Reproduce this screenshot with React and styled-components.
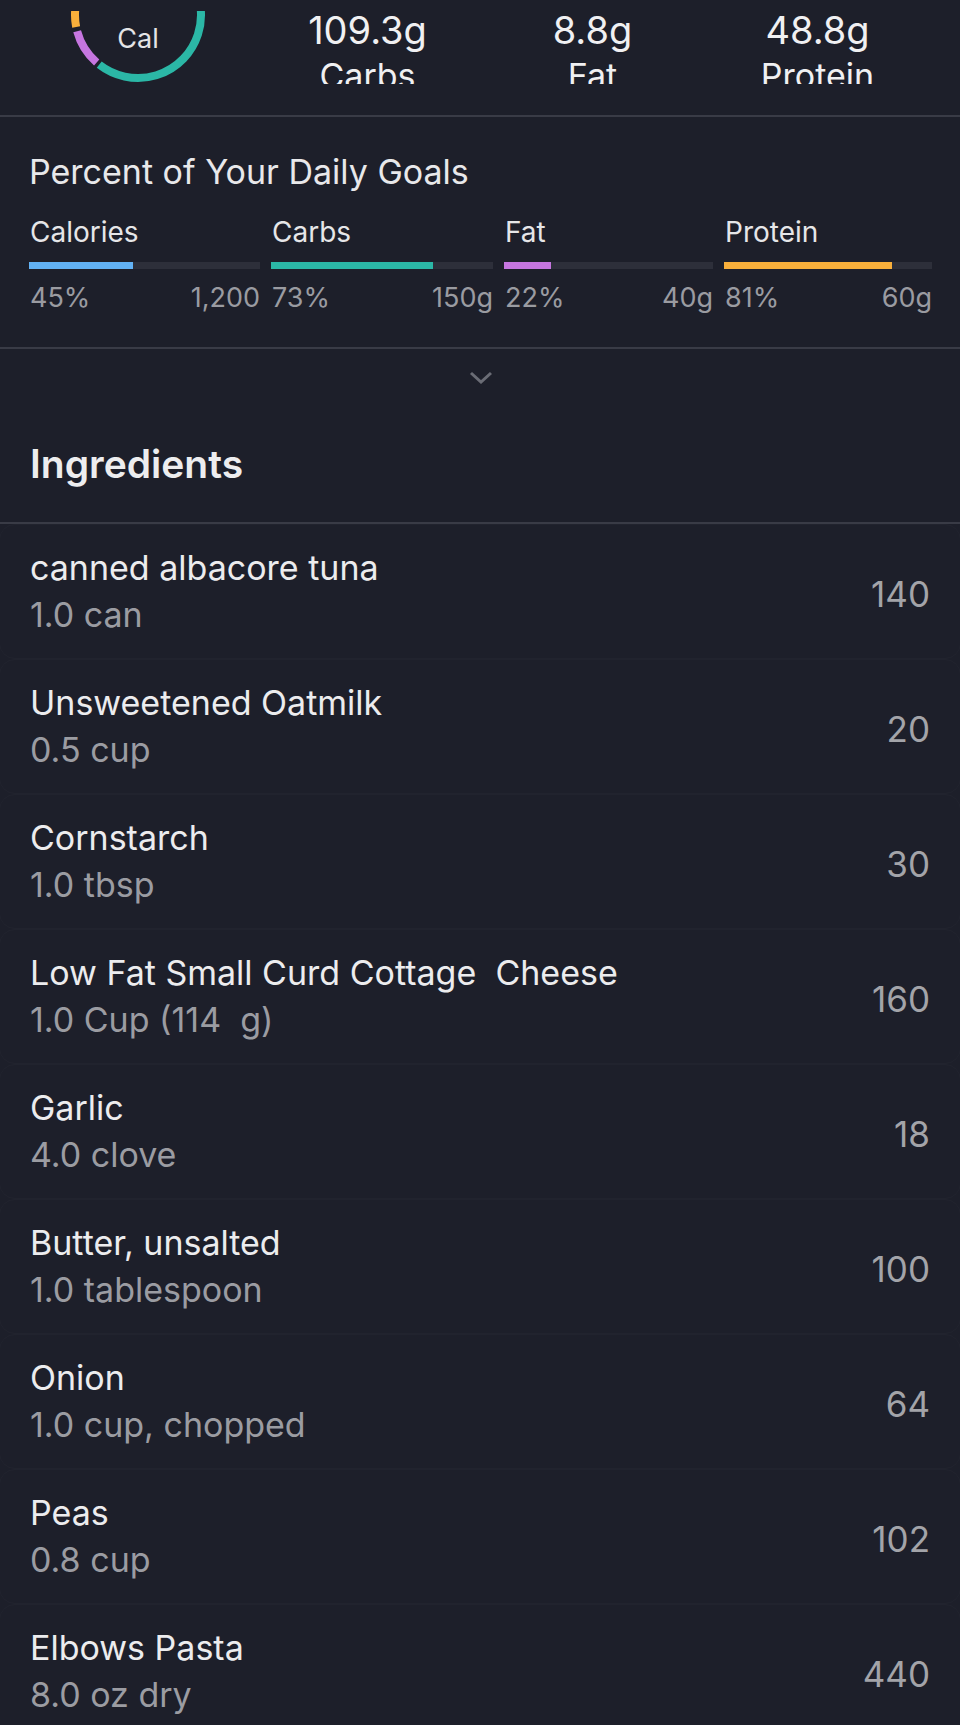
import React from "react";
import styled, { createGlobalStyle } from "styled-components";

const GlobalStyle = createGlobalStyle`
  html, body {
    margin: 0;
    padding: 0;
    background: #1d1f2a;
  }
  body {
    font-family: Inter, "Noto Sans", "Liberation Sans", sans-serif;
    color: #e8e8ea;
  }
`;

const Page = styled.main`
  width: 960px;
  height: 1725px;
  overflow: hidden;
  background: #1d1f2a;
`;

const Summary = styled.section`
  padding: 11px 30px 31px;
  border-bottom: 2px solid #393b46;
`;

const SummaryWindow = styled.div`
  height: 73px;
  overflow: hidden;
`;

const SummaryGrid = styled.div`
  display: grid;
  grid-template-columns: repeat(4, 1fr);
  margin-top: -66px;
`;

const RingWrap = styled.div`
  position: relative;
  width: 140px;
  height: 140px;
  margin-left: 38px;
`;

const RingLabel = styled.span`
  position: absolute;
  top: 80px;
  left: 0;
  right: 0;
  text-align: center;
  font-size: 27px;
  line-height: 27px;
  color: #e4e4e6;
`;

const Macro = styled.div`
  display: flex;
  flex-direction: column;
  align-items: center;
  padding-top: 62px;
`;

const MacroValue = styled.span`
  font-size: 38px;
  line-height: 46px;
  color: #f0f0f2;
`;

const MacroName = styled.span`
  font-size: 34px;
  line-height: 45px;
  color: #f0f0f2;
`;

const Goals = styled.section`
  padding: 35px 28px 31px 29px;
  border-bottom: 2px solid #393b46;
`;

const GoalsTitle = styled.h2`
  margin: 0 0 22px;
  font-size: 34px;
  line-height: 40px;
  font-weight: 400;
  color: #e8e8ea;
`;

const GoalsGrid = styled.div`
  display: grid;
  grid-template-columns: 231px 222px 209px 208px;
  column-gap: 11px;
`;

const Goal = styled.div`
  display: flex;
  flex-direction: column;
`;

const GoalLabel = styled.span`
  font-size: 28px;
  line-height: 36px;
  color: #e6e6e8;
  padding-left: 1px;
`;

const Track = styled.div`
  height: 7px;
  margin: 12px 0 11px;
  background: #2d2f3a;
`;

const Fill = styled.div`
  height: 100%;
  background: ${(p) => p.$color};
`;

const GoalNumbers = styled.div`
  display: flex;
  justify-content: space-between;
  font-size: 27px;
  line-height: 36px;
  color: #9a9ba1;
  padding-left: 1px;
`;

const Toggle = styled.div`
  display: flex;
  justify-content: center;
  padding-top: 22px;
`;

const Chevron = styled.svg`
  width: 24px;
  height: 14px;
  margin-left: 2px;
`;

const SectionHeader = styled.h2`
  margin: 0;
  padding: 55px 30px 34px;
  font-size: 39px;
  line-height: 48px;
  font-weight: 600;
  color: #ededef;
  border-bottom: 2px solid #393b46;
`;

const List = styled.ul`
  margin: 0;
  padding: 0;
  list-style: none;
`;

const Row = styled.li`
  display: flex;
  align-items: center;
  justify-content: space-between;
  padding: 20px 30px 21px 30px;
  border: 1px solid rgba(255, 255, 255, 0.02);
  border-radius: 16px;
  margin: 0 -1px;
  height: 135px;
  box-sizing: border-box;
`;

const RowText = styled.div`
  display: flex;
  flex-direction: column;
`;

const RowName = styled.span`
  font-size: 34px;
  line-height: 47px;
  color: #ececee;
  white-space: pre;
`;

const RowAmount = styled.span`
  font-size: 34px;
  line-height: 47px;
  color: #9b9ca2;
  white-space: pre;
`;

const RowCalories = styled.span`
  font-size: 35px;
  line-height: 40px;
  color: #a3a4a9;
  margin-top: 6px;
`;

const macros = [
  { value: "109.3g", name: "Carbs" },
  { value: "8.8g", name: "Fat" },
  { value: "48.8g", name: "Protein" },
];

const goals = [
  { label: "Calories", pct: 45, target: "1,200", color: "#62b2f5" },
  { label: "Carbs", pct: 73, target: "150g", color: "#2bb7a6" },
  { label: "Fat", pct: 22.5, shown: 22, target: "40g", color: "#c676e0" },
  { label: "Protein", pct: 81, target: "60g", color: "#f8af3b" },
];

const ingredients = [
  ["canned albacore tuna", "1.0 can", 140],
  ["Unsweetened Oatmilk", "0.5 cup", 20],
  ["Cornstarch", "1.0 tbsp", 30],
  ["Low Fat Small Curd Cottage  Cheese", "1.0 Cup (114  g)", 160],
  ["Garlic", "4.0 clove", 18],
  ["Butter, unsalted", "1.0 tablespoon", 100],
  ["Onion", "1.0 cup, chopped", 64],
  ["Peas", "0.8 cup", 102],
  ["Elbows Pasta", "8.0 oz dry", 440],
];

const arc = (from, to, r = 63, c = 70) => {
  const rad = (a) => (a * Math.PI) / 180;
  const x1 = c + r * Math.cos(rad(from));
  const y1 = c + r * Math.sin(rad(from));
  const x2 = c + r * Math.cos(rad(to));
  const y2 = c + r * Math.sin(rad(to));
  const large = to - from > 180 ? 1 : 0;
  return `M ${x1} ${y1} A ${r} ${r} 0 ${large} 1 ${x2} ${y2}`;
};

function CalorieRing() {
  return (
    <RingWrap>
      <svg width="140" height="140" viewBox="0 0 140 140">
        <g fill="none" strokeWidth="8">
          <path d={arc(-92, 128)} stroke="#2bb7a6" />
          <path d={arc(131, 165)} stroke="#c676e0" />
          <path d={arc(169, 268)} stroke="#f8af3b" />
        </g>
      </svg>
      <RingLabel>Cal</RingLabel>
    </RingWrap>
  );
}

export default function App() {
  return (
    <Page>
      <GlobalStyle />
      <Summary>
        <SummaryWindow>
          <SummaryGrid>
            <CalorieRing />
            {macros.map((m) => (
              <Macro key={m.name}>
                <MacroValue>{m.value}</MacroValue>
                <MacroName>{m.name}</MacroName>
              </Macro>
            ))}
          </SummaryGrid>
        </SummaryWindow>
      </Summary>

      <Goals>
        <GoalsTitle>Percent of Your Daily Goals</GoalsTitle>
        <GoalsGrid>
          {goals.map((g) => (
            <Goal key={g.label}>
              <GoalLabel>{g.label}</GoalLabel>
              <Track>
                <Fill $color={g.color} style={{ width: `${g.pct}%` }} />
              </Track>
              <GoalNumbers>
                <span>{g.shown ?? g.pct}%</span>
                <span>{g.target}</span>
              </GoalNumbers>
            </Goal>
          ))}
        </GoalsGrid>
      </Goals>

      <Toggle>
        <Chevron viewBox="0 0 24 14">
          <path
            d="M2 2 L12 11 L22 2"
            fill="none"
            stroke="#6a6c75"
            strokeWidth="3"
          />
        </Chevron>
      </Toggle>

      <SectionHeader>Ingredients</SectionHeader>

      <List>
        {ingredients.map(([name, amount, cal]) => (
          <Row key={name}>
            <RowText>
              <RowName>{name}</RowName>
              <RowAmount>{amount}</RowAmount>
            </RowText>
            <RowCalories>{cal}</RowCalories>
          </Row>
        ))}
      </List>
    </Page>
  );
}
